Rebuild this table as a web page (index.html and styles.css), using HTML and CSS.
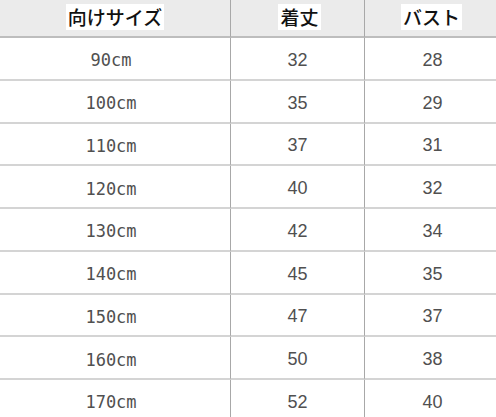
FILE: index.html
```html
<!DOCTYPE html>
<html lang="ja">
<head>
<meta charset="utf-8">
<link rel="stylesheet" href="styles.css">
</head>
<body>
<div class="table">
  <div class="hcell c1"><span class="hl">向けサイズ</span></div>
  <div class="hcell c2"><span class="hl">着丈</span></div>
  <div class="hcell c3"><span class="hl">バスト</span></div>

  <div class="cell c1 size">90cm</div><div class="cell c2">32</div><div class="cell c3">28</div>
  <div class="cell c1 size">100cm</div><div class="cell c2">35</div><div class="cell c3">29</div>
  <div class="cell c1 size">110cm</div><div class="cell c2">37</div><div class="cell c3">31</div>
  <div class="cell c1 size">120cm</div><div class="cell c2">40</div><div class="cell c3">32</div>
  <div class="cell c1 size">130cm</div><div class="cell c2">42</div><div class="cell c3">34</div>
  <div class="cell c1 size">140cm</div><div class="cell c2">45</div><div class="cell c3">35</div>
  <div class="cell c1 size">150cm</div><div class="cell c2">47</div><div class="cell c3">37</div>
  <div class="cell c1 size">160cm</div><div class="cell c2">50</div><div class="cell c3">38</div>
  <div class="cell c1 size">170cm</div><div class="cell c2">52</div><div class="cell c3">40</div>
</div>
</body>
</html>
```
FILE: styles.css
```css
html, body {
  margin: 0;
  padding: 0;
  background: #ffffff;
}
body {
  width: 496px;
  height: 417px;
  overflow: hidden;
}
.table {
  display: grid;
  grid-template-columns: 231px 134px 1fr;
  grid-template-rows: 38px repeat(9, 42.75px);
}
.hcell {
  background: #ebebeb;
  border-bottom: 2px solid #bdbdbd;
  display: flex;
  align-items: center;
  justify-content: center;
  box-sizing: border-box;
  padding-bottom: 3px;
}
.hl {
  background: #ffffff;
  color: #111;
  font-family: "Noto Sans CJK JP", sans-serif;
  font-weight: 500;
  font-size: 19px;
  line-height: 24px;
  padding: 1px 2px;
}
.cell {
  display: flex;
  align-items: center;
  justify-content: center;
  box-sizing: border-box;
  border-bottom: 2px solid #d4d4d4;
  color: #505050;
  font-family: "Liberation Sans", Arial, sans-serif;
  font-size: 18px;
  padding-top: 4px;
}
.c1, .c2 {
  border-right: 1px solid #a8a8a8;
}
.size {
  font-family: "DejaVu Sans Mono", monospace;
  font-size: 17px;
  padding-right: 8px;
}
.hcell.c2 { padding-left: 4px; }
.hcell.c3 { padding-left: 2px; }
.cell.c3 { padding-left: 4px; }
```
